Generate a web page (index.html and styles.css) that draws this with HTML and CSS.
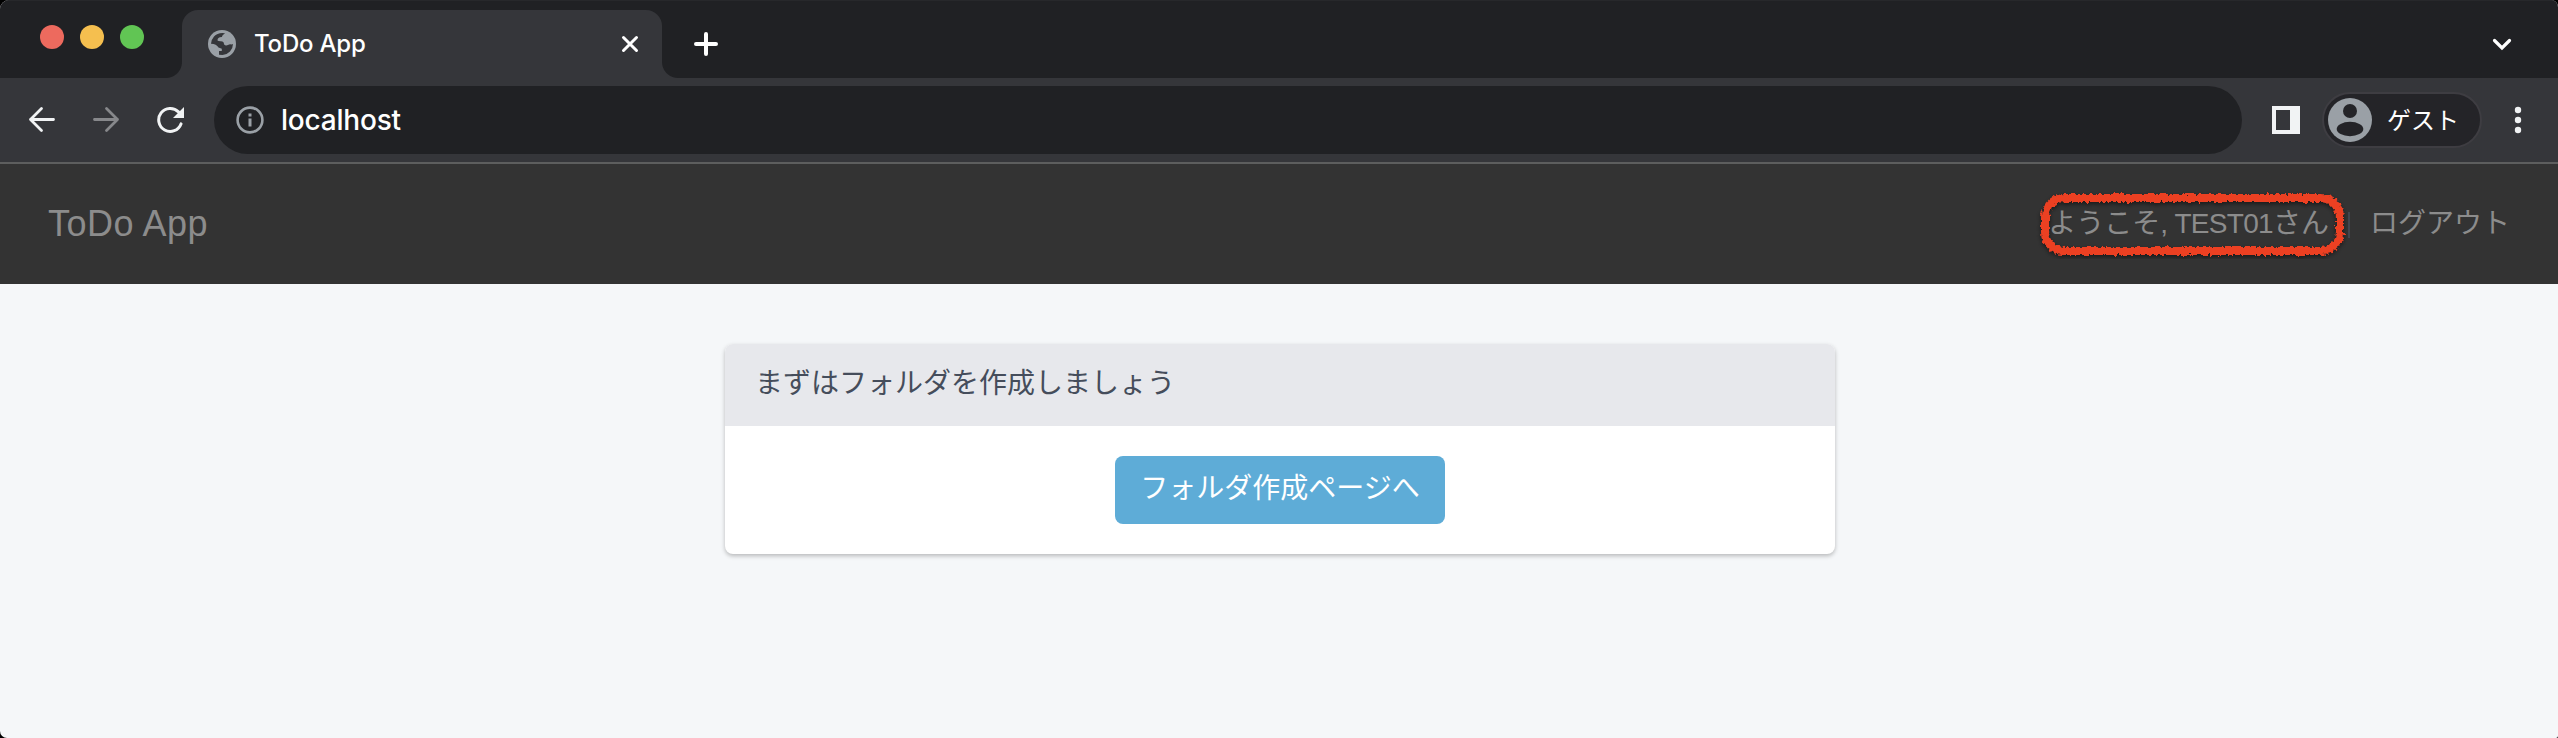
FILE: index.html
```html
<!DOCTYPE html>
<html lang="ja">
<head>
<meta charset="utf-8">
<title>ToDo App</title>
<link rel="stylesheet" href="styles.css">
</head>
<body>
<div class="window">
  <div class="tabstrip">
    <div class="lights"><i class="light red"></i><i class="light yellow"></i><i class="light green"></i></div>
    <div class="tab">
      <svg class="globe" width="28" height="28" viewBox="0 0 28 28"><circle cx="14" cy="14" r="14" fill="#9aa0a6"/><path fill="#35363a" d="M3 13.800Q3.300 9.500 6 6.500Q9 3.300 14.500 3Q16.800 3 17 3.500Q14.200 4.500 13.800 7Q9.300 7.400 9.500 10.500Q10.200 11.300 13 11.200Q16 11.300 16 14.200Q17.500 16.300 20 15Q21.500 13.800 23.500 14.400L25 14Q24.900 18.500 22 21.500Q19 24.700 14.500 25L11 24.700V21H13.800V18.800L10.500 17.500Q8.500 14 3 13.800Z"/></svg>
      <span class="tab-title">ToDo App</span>
      <svg class="close" width="18" height="18" viewBox="0 0 18 18"><path d="M2.500 2.500 15.500 15.500M15.500 2.500 2.500 15.500" stroke="#fff" stroke-width="3" stroke-linecap="round"/></svg>
    </div>
    <svg class="plus" width="24" height="24" viewBox="0 0 24 24"><path d="M12 2V22M2 12H22" stroke="#fff" stroke-width="4" stroke-linecap="round"/></svg>
    <svg class="chevron" width="20" height="14" viewBox="0 0 20 14"><path d="M2.500 2.500 10 10 17.500 2.500" fill="none" stroke="#fff" stroke-width="3.200" stroke-linecap="round" stroke-linejoin="miter"/></svg>
  </div>
  <div class="toolbar">
    <svg class="arrow" width="28" height="28" viewBox="0 0 28 28"><path d="M13.500 2.500 2.500 13.500 13.500 24.500M2.500 13.500H25.500" fill="none" stroke="#f1f3f4" stroke-width="2.800" stroke-linecap="round" stroke-linejoin="round"/></svg>
    <svg class="arrow next" width="28" height="28" viewBox="0 0 28 28"><path d="M14.500 2.500 25.500 13.500 14.500 24.500M25.500 13.500H2.500" fill="none" stroke="#87888b" stroke-width="2.800" stroke-linecap="round" stroke-linejoin="round"/></svg>
    <svg class="reload" width="28" height="28" viewBox="0 0 28 28"><path d="M21.500 5.900A11.500 11.500 0 1 0 24 17.900" fill="none" stroke="#f1f3f4" stroke-width="3" stroke-linecap="round"/><path d="M27 1V12H16Z" fill="#f1f3f4"/></svg>
    <div class="omnibox">
      <svg width="28" height="28" viewBox="0 0 28 28"><circle cx="14" cy="14" r="12.400" fill="none" stroke="#9aa0a6" stroke-width="2.600"/><path d="M12.500 7.500h3v3h-3zM12.500 12.500h3v8h-3z" fill="#9aa0a6"/></svg>
      <span class="url">localhost</span>
    </div>
    <svg class="panel" width="28" height="28" viewBox="0 0 28 28"><path fill="#f1f3f4" fill-rule="evenodd" d="M0 0H28V28H0ZM4 4V24H18V4Z"/></svg>
    <div class="profile">
      <svg width="44" height="44" viewBox="0 0 44 44"><circle cx="22" cy="22" r="22" fill="#9aa0a6"/><circle cx="22" cy="13" r="7" fill="#242428"/><ellipse cx="22" cy="31" rx="13.300" ry="7.200" fill="#242428"/></svg>
      <span class="guest">ゲスト</span>
    </div>
    <svg class="more" width="8" height="28" viewBox="0 0 8 28"><g fill="#f1f3f4"><circle cx="4" cy="4" r="3.200"/><circle cx="4" cy="14" r="3.200"/><circle cx="4" cy="24" r="3.200"/></g></svg>
  </div>
  <nav class="navbar">
    <span class="brand">ToDo App</span>
    <div class="account">
      <div class="welcome">ようこそ<span class="user">, TEST01</span>さん
        <svg class="marker" width="322" height="78" viewBox="0 0 322 78">
          <defs><filter id="crayon" x="-5%" y="-15%" width="110%" height="130%">
            <feTurbulence type="fractalNoise" baseFrequency="0.32" numOctaves="2" seed="4" result="n"/>
            <feDisplacementMap in="SourceGraphic" in2="n" scale="6" xChannelSelector="R" yChannelSelector="G" result="d"/>
            <feDropShadow in="d" dx="0" dy="2" stdDeviation="2" flood-color="#000" flood-opacity="0.5"/>
          </filter></defs>
          <rect x="12" y="12" width="295" height="53" rx="19" fill="none" stroke="#ec4024" stroke-width="8" filter="url(#crayon)"/>
        </svg>
      </div>
      <i class="divider"></i>
      <span class="logout">ログアウト</span>
    </div>
  </nav>
  <main class="content">
    <section class="card">
      <div class="card-head">まずはフォルダを作成しましょう</div>
      <div class="card-body"><a class="button">フォルダ作成ページへ</a></div>
    </section>
  </main>
</div>
</body>
</html>
```

FILE: styles.css
```css
* { box-sizing: border-box; }
body { margin: 0; background: #000; font-family: "Liberation Sans", "Noto Sans CJK JP", sans-serif; }
svg { display: block; flex: none; }
.window { height: 738px; display: flex; flex-direction: column; overflow: hidden; background: #f5f7f9; border-radius: 9px 7px 2px 7px; }
.tabstrip { height: 78px; flex: none; display: flex; background: #202124; box-shadow: inset 0 1px 0 #27282b; }
.lights { display: flex; gap: 16px; padding: 25px 0 0 40px; width: 182px; }
.light { width: 24px; height: 24px; border-radius: 50%; }
.red { background: #ed6a5e; }
.yellow { background: #f5bf4f; }
.green { background: #61c554; }
.tab { position: relative; display: flex; align-items: center; width: 480px; height: 68px; margin-top: 10px; padding: 0 23px 0 26px; background: #35363a; border-radius: 16px 16px 0 0; }
.tab::before, .tab::after { content: ""; position: absolute; bottom: 0; width: 16px; height: 16px; }
.tab::before { left: -16px; background: radial-gradient(circle at 0 0, #202124 15.500px, #35363a 16.500px); }
.tab::after { right: -16px; background: radial-gradient(circle at 100% 0, #202124 15.500px, #35363a 16.500px); }
.tab-title { margin-left: 18px; font: 450 24px/32px Inter, sans-serif; letter-spacing: -0.2px; color: #fff; }
.close { margin-left: auto; }
.plus { margin: 32px 0 0 32px; }
.chevron { margin: 38px 46px 0 auto; }
.toolbar { height: 86px; flex: none; display: flex; align-items: center; padding: 0 36px 0 28px; background: #35363a; border-bottom: 2px solid #5d5e5e; }
.next { margin-left: 36px; }
.reload { margin-left: 37px; }
.omnibox { flex: 1; display: flex; align-items: center; height: 68px; margin-left: 29px; padding-left: 22px; background: #202124; border-radius: 34px; }
.url { margin-left: 17px; font: 450 28px/36px Inter, sans-serif; letter-spacing: -0.2px; color: #fff; }
.panel { margin-left: 30px; }
.profile { display: flex; align-items: center; width: 160px; height: 56px; margin-left: 22px; padding-left: 4px; background: #242428; border: 2px solid #3e3d42; border-radius: 28px; }
.guest { margin-left: 15px; padding-bottom: 2px; font: 400 24px/36px "Noto Sans CJK JP", sans-serif; color: #fff; }
.more { margin-left: 32px; }
.navbar { height: 120px; flex: none; display: flex; align-items: center; justify-content: space-between; padding: 0 48px; background: #333; color: #8c8c8c; }
.brand { font-size: 36px; line-height: 40px; letter-spacing: 0.5px; }
.account { display: flex; align-items: center; font-size: 28px; line-height: 40px; }
.welcome { position: relative; white-space: nowrap; }
.user { letter-spacing: -0.7px; }
.marker { position: absolute; left: -15px; top: -18px; }
.divider { width: 2px; height: 26px; margin: 2px 20px 0 19px; background: #41464f; }
.content { flex: 1; padding-top: 60px; }
.card { width: 1110px; height: 210px; margin: 0 auto; background: #fff; border-radius: 8px; box-shadow: 0 2px 4px rgba(0,0,0,.25); overflow: hidden; position: relative; left: 1px; }
.card-head { height: 82px; padding: 20px 30px; background: #e7e8ec; color: #454d5b; font-size: 28px; line-height: 40px; }
.card-body { display: flex; justify-content: center; padding-top: 30px; }
.button { width: 330px; height: 68px; border-radius: 8px; background: #5eacd7; color: #fff; font-size: 28px; line-height: 66px; text-align: center; }
```
